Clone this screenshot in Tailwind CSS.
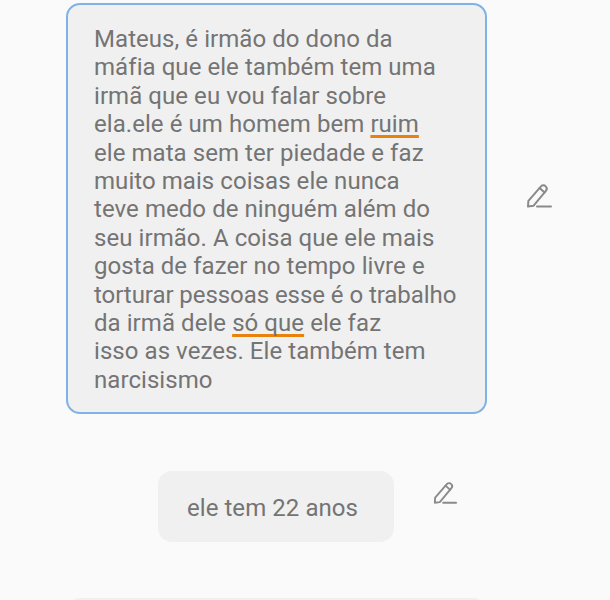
<!DOCTYPE html>
<html lang="pt">
<head>
  <meta charset="UTF-8">
  <meta name="viewport" content="width=device-width, initial-scale=1.0">
  <title>Personagem</title>
  <script src="https://cdn.jsdelivr.net/npm/@tailwindcss/browser@4"></script>
</head>

<body class="bg-[#fafafa] text-[#747474] font-['Roboto',sans-serif] overflow-hidden">
  <div class="h-[600px] overflow-hidden pt-[3px]">
    <!-- Selected message -->
    <div class="flex items-center">
      <div class="ml-[66px] w-[421px] h-[411px] rounded-[14px] border-2 border-[#7db3e6] bg-[#f0f0f0] pl-[27px] pt-[20px] text-[24px] leading-[28.4px] tracking-[0.06px] whitespace-nowrap">
        <div class="-ml-px">
          Mateus, é irmão do dono da<br>
          máfia que ele também tem uma<br>
          irmã que eu vou falar sobre<br>
          ela.ele é um homem bem <span class="underline decoration-[#e8820c] decoration-[3px] underline-offset-[3px] [text-decoration-skip-ink:none]">ruim</span><br>
          ele mata sem ter piedade e faz<br>
          muito mais coisas ele nunca<br>
          teve medo de ninguém além do<br>
          seu irmão. A coisa que ele mais<br>
          gosta de fazer no tempo livre e<br>
          <span class="tracking-[-0.06px]">torturar pessoas esse é o trabalho</span><br>
          da irmã dele <span class="underline decoration-[#e8820c] decoration-[3px] underline-offset-[3px] [text-decoration-skip-ink:none]">só que</span> ele faz<br>
          isso as vezes. Ele também tem<br>
          narcisismo
        </div>
      </div>
      <svg class="ml-[38px] mt-[-26px] w-[28px] h-[28px] text-[#8a8a8a]" viewBox="0 0 28 28" fill="none" stroke="currentColor" stroke-width="2" stroke-linecap="round" stroke-linejoin="round">
        <path d="M3 24.5l.4-5.6L16 4.4a3.2 3.2 0 0 1 4.7 0a3.2 3.2 0 0 1 .2 4.4L8.4 23.8z"/>
        <path d="M14.6 6l5 4.6"/>
        <path d="M12 24.5h14"/>
      </svg>
    </div>

    <!-- Second message -->
    <div class="flex items-center mt-[57px]">
      <div class="ml-[158px] w-[236px] h-[71px] rounded-[14px] bg-[#f0f0f0] flex items-center justify-center text-[24px] pt-[2px] pr-[7px] tracking-[0.06px]">ele tem 22 anos</div>
      <svg class="ml-[38px] mt-[-28px] w-[26px] h-[26px] text-[#8a8a8a]" viewBox="0 0 28 28" fill="none" stroke="currentColor" stroke-width="2" stroke-linecap="round" stroke-linejoin="round">
        <path d="M3 24.5l.4-5.6L16 4.4a3.2 3.2 0 0 1 4.7 0a3.2 3.2 0 0 1 .2 4.4L8.4 23.8z"/>
        <path d="M14.6 6l5 4.6"/>
        <path d="M12 24.5h14"/>
      </svg>
    </div>

    <!-- Next message, cut off by the screen edge -->
    <div class="ml-[66px] w-[421px] h-[40px] mt-[56px] rounded-[14px] bg-[#f0f0f0]"></div>
  </div>
</body>
</html>
